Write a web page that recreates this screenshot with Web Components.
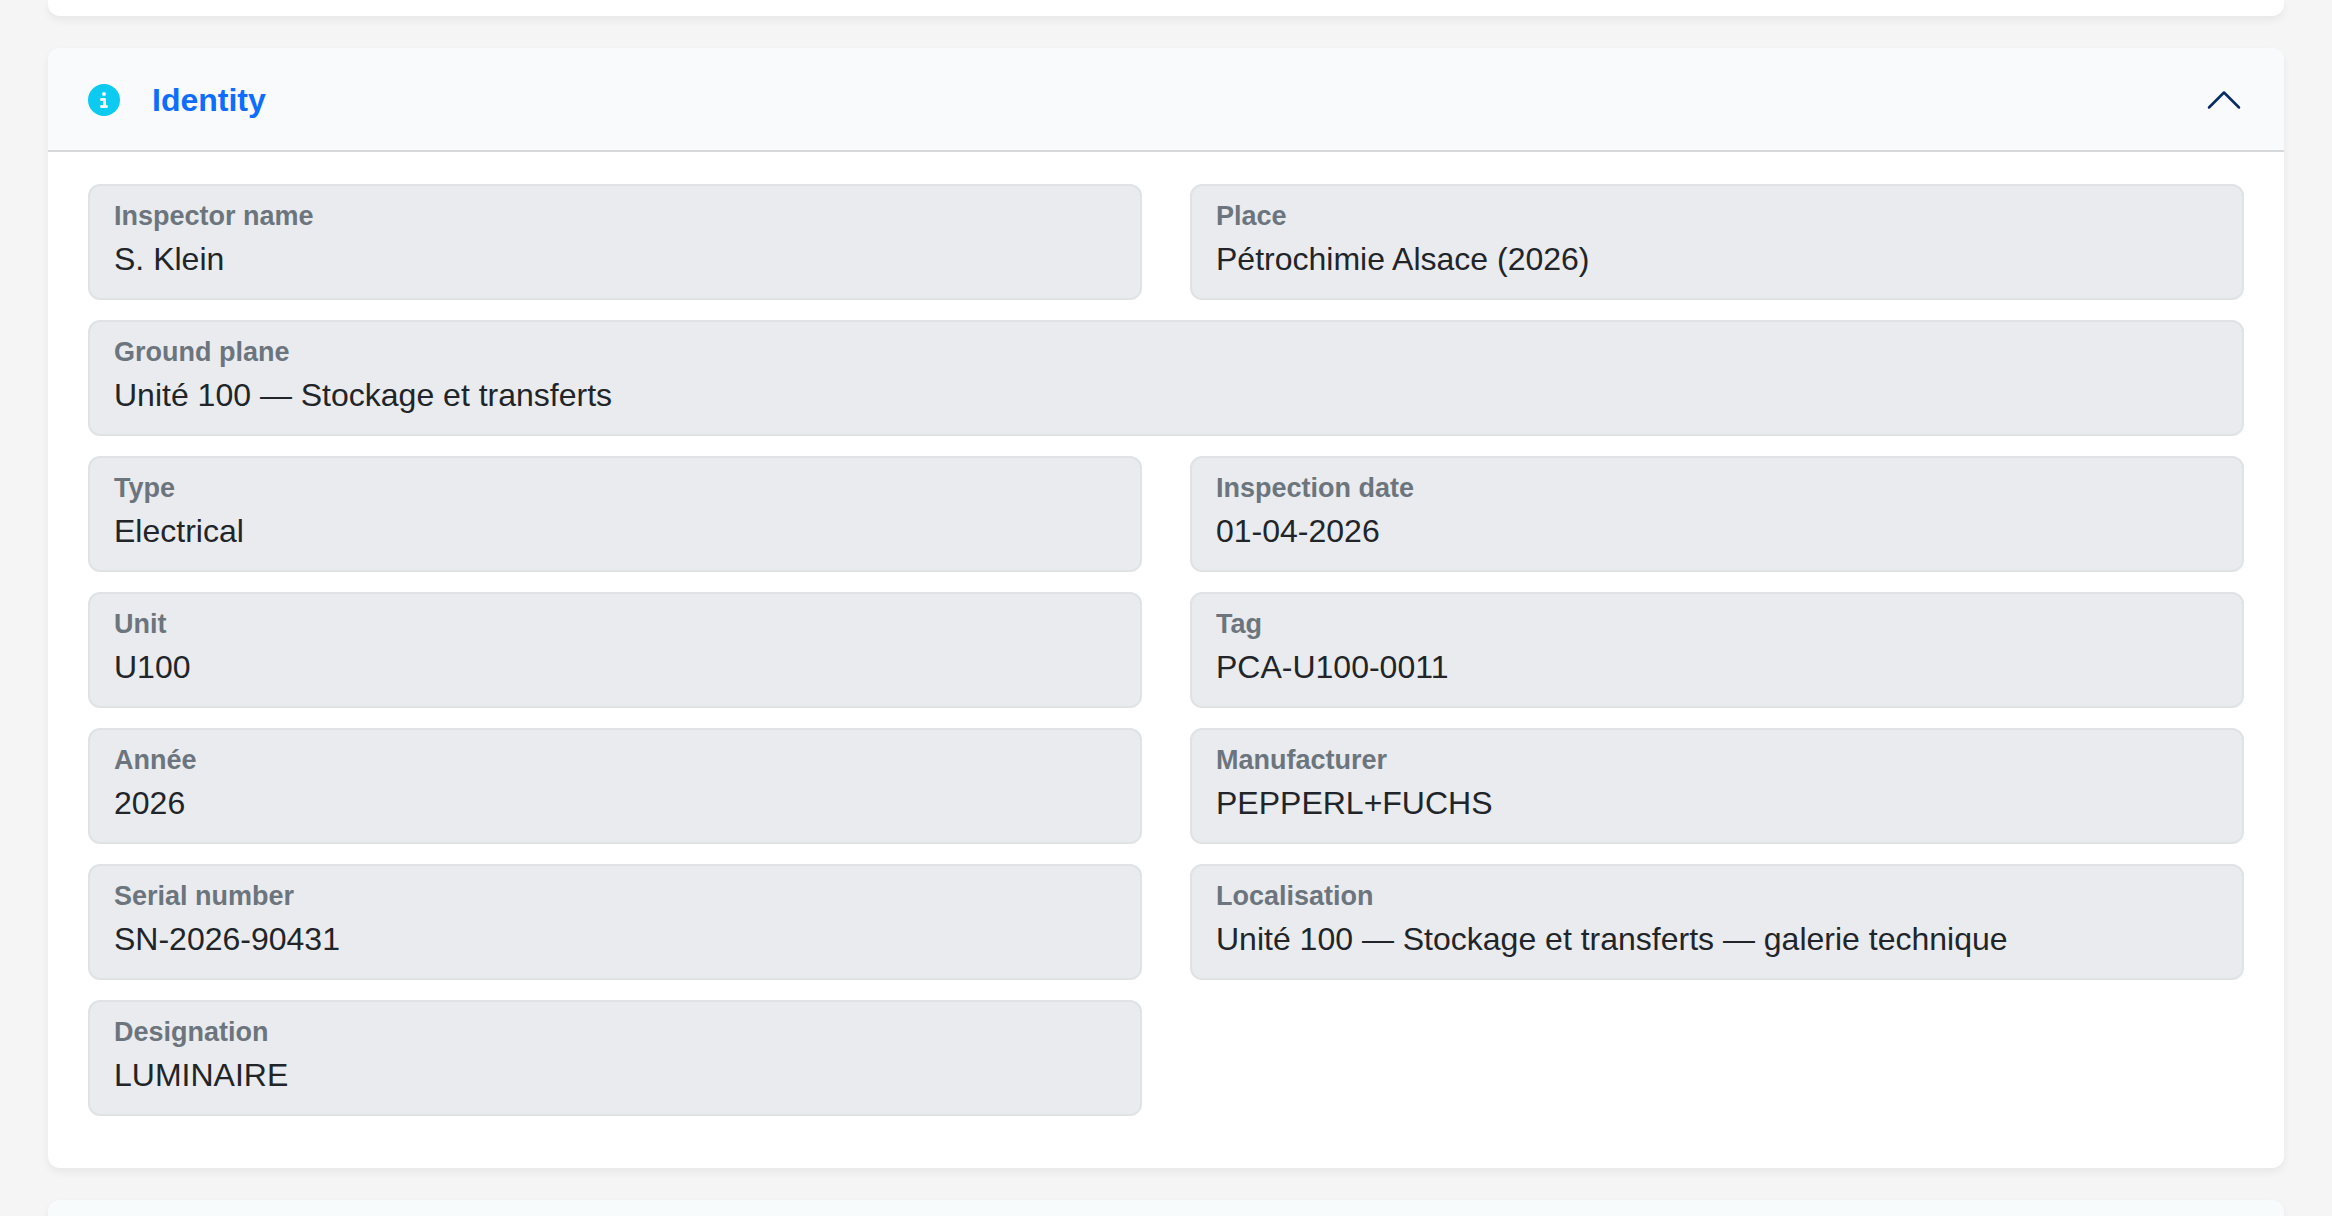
<!DOCTYPE html>
<html lang="en">
<head>
<meta charset="utf-8">
<title>Inspection – Identity</title>
<style>
  body { margin: 0; background: #f5f5f5; font-family: "Liberation Sans", Arial, sans-serif; color: #212529; }
</style>
</head>
<body>
<inspection-page>
  <panel-card edge="bottom"></panel-card>
  <panel-card>
    <panel-header slot="header">Identity</panel-header>
    <read-field label="Inspector name" value="S. Klein"></read-field>
    <read-field label="Place" value="Pétrochimie Alsace (2026)"></read-field>
    <read-field wide label="Ground plane" value="Unité 100 — Stockage et transferts"></read-field>
    <read-field label="Type" value="Electrical"></read-field>
    <read-field label="Inspection date" value="01-04-2026"></read-field>
    <read-field label="Unit" value="U100"></read-field>
    <read-field label="Tag" value="PCA-U100-0011"></read-field>
    <read-field label="Année" value="2026"></read-field>
    <read-field label="Manufacturer" value="PEPPERL+FUCHS"></read-field>
    <read-field label="Serial number" value="SN-2026-90431"></read-field>
    <read-field label="Localisation" value="Unité 100 — Stockage et transferts — galerie technique"></read-field>
    <read-field label="Designation" value="LUMINAIRE"></read-field>
  </panel-card>
  <panel-card edge="top"></panel-card>
</inspection-page>
<script>
  class InspectionPage extends HTMLElement {
    constructor() {
      super();
      this.attachShadow({ mode: "open" }).innerHTML = `
        <style>
          :host { display: block; }
          main { display: flex; flex-direction: column; gap: 32px; min-height: 100vh; padding: 0 48px; box-sizing: border-box; }
        </style>
        <main><slot></slot></main>`;
    }
  }

  class PanelCard extends HTMLElement {
    constructor() {
      super();
      this.attachShadow({ mode: "open" }).innerHTML = `
        <style>
          :host { display: block; background: #fff; border-radius: 12px; box-shadow: 0 4px 8px rgba(0, 0, 0, .06); }
          :host([edge]) .body { display: none; }
          :host([edge="bottom"]) { min-height: 16px; border-radius: 0 0 12px 12px; }
          :host([edge="top"]) { flex: 1; min-height: 16px; background: #f8fbfc; border-radius: 12px 12px 0 0; }
          .body { display: grid; grid-template-columns: repeat(2, minmax(0, 1fr)); gap: 20px 48px; padding: 32px 40px 52px; }
        </style>
        <slot name="header"></slot>
        <div class="body"><slot></slot></div>`;
    }
  }

  class PanelHeader extends HTMLElement {
    constructor() {
      super();
      this.attachShadow({ mode: "open" }).innerHTML = `
        <style>
          :host { display: block; }
          h2 { margin: 0; font-size: 32px; }
          button { display: flex; align-items: center; gap: 32px; width: 100%; padding: 32px 40px 30px; border: 0; border-bottom: 2px solid #d6d9db;
            border-radius: 12px 12px 0 0; background: #f8fafc; color: #0d6efd; font: inherit; font-weight: 700; line-height: 40px; text-align: left; }
          .title { flex: 1; }
          svg { display: block; flex: none; }
          .info { width: 32px; height: 32px; fill: #0dcaf0; }
          .chevron { width: 40px; height: 40px; fill: none; stroke: #052c65; }
        </style>
        <h2><button type="button" aria-expanded="true">
          <svg class="info" viewBox="0 0 512 512" aria-hidden="true"><path d="M256 512A256 256 0 1 0 256 0a256 256 0 1 0 0 512zM216 336h24V272H216c-13.300 0-24-10.700-24-24s10.700-24 24-24h48c13.300 0 24 10.700 24 24v88h8c13.300 0 24 10.700 24 24s-10.700 24-24 24H216c-13.300 0-24-10.700-24-24s10.700-24 24-24zm40-208a32 32 0 1 1 0 64 32 32 0 1 1 0-64z"/></svg>
          <span class="title"><slot></slot></span>
          <svg class="chevron" viewBox="0 0 16 16" aria-hidden="true"><path d="M2 11l6-6 6 6" stroke-linecap="round" stroke-linejoin="round"/></svg>
        </button></h2>`;
    }
  }

  class ReadField extends HTMLElement {
    connectedCallback() {
      if (this.shadowRoot) return;
      this.attachShadow({ mode: "open" }).innerHTML = `
        <style>
          :host { display: block; }
          :host([wide]) { grid-column: 1 / -1; }
          .box { display: flex; flex-direction: column; padding: 13px 24px; border: 2px solid #dfe3e6; border-radius: 12px; background: #e9ebee; }
          label { font-size: 27px; line-height: 34px; font-weight: 700; color: #6c757d; }
          input { width: 100%; height: 52px; margin: 0; padding: 0; border: 0; outline: 0; background: none; color: #212529; font-family: inherit; font-size: 32px; box-sizing: border-box; }
        </style>
        <div class="box"><label for="value"></label><input id="value" type="text" readonly></div>`;
      this.shadowRoot.querySelector("label").textContent = this.getAttribute("label");
      this.shadowRoot.querySelector("input").value = this.getAttribute("value");
    }
  }

  customElements.define("inspection-page", InspectionPage);
  customElements.define("panel-card", PanelCard);
  customElements.define("panel-header", PanelHeader);
  customElements.define("read-field", ReadField);
</script>
</body>
</html>
